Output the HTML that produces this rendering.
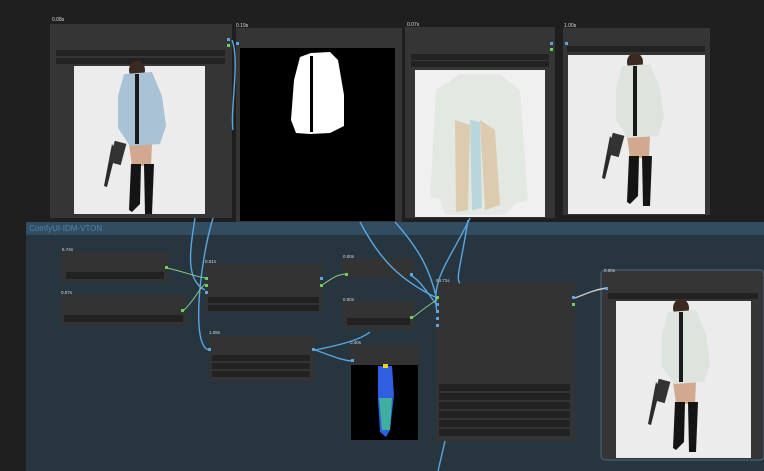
<!DOCTYPE html>
<html><head><style>html,body{margin:0;padding:0;background:#202020;}svg{display:block}text{font-family:"Liberation Sans",sans-serif}</style></head><body>
<svg width="764" height="471" viewBox="0 0 764 471" xmlns="http://www.w3.org/2000/svg">
<defs>
<g id="person">
<path d="M38 78 L30 120 L33 121 L42 85 Z" fill="#2a2a2a"/>
<rect x="38" y="76" width="12" height="22" fill="#333" transform="rotate(15 44 86)"/>
<path d="M55 78 L78 78 L77 100 L58 100 Z" fill="#d2a88e"/>
<path d="M57 98 L67 98 L66 138 L58 146 L55 144 Z" fill="#141414"/>
<path d="M70 98 L80 98 L78 148 L71 148 Z" fill="#141414"/>
<ellipse cx="63" cy="4" rx="8" ry="9" fill="#3a2a22"/>
<path d="M50 8 L78 6 L88 30 L92 60 L86 78 L56 80 L44 62 L44 30 Z" class="jk"/>
<rect x="61" y="8" width="4" height="70" fill="#1a1a1a"/>
</g>
</defs>
<rect width="764" height="471" fill="#1f1f1f"/>
<rect x="26" y="222" width="738" height="249" fill="#27353f"/>
<rect x="26" y="222" width="738" height="13" fill="#324c60"/>
<text x="29" y="231" font-size="8" fill="#4a86b0">ComfyUI-IDM-VTON</text>

<rect x="50" y="24" width="182" height="194" fill="#353535"/>
<rect x="56" y="50" width="169" height="6" fill="#222"/><rect x="56" y="58" width="169" height="6" fill="#222"/>
<rect x="74" y="66" width="131" height="148" fill="#ececec"/>
<g transform="translate(74,66)"><use href="#person" style="fill:#a9c2d6"/></g>
<rect x="236" y="28" width="166" height="194" fill="#353535"/>
<rect x="240" y="48" width="155" height="173" fill="#000"/>
<path d="M300 57 L311 53 L330 52 L338 60 L344 95 L344 126 L330 133 L310 134 L296 133 L291 120 L294 80 Z" fill="#fff"/>
<rect x="310" y="56" width="3" height="76" fill="#000"/>
<rect x="405" y="27" width="150" height="191" fill="#353535"/>
<rect x="411" y="54" width="138" height="6" fill="#222"/><rect x="411" y="61" width="138" height="6" fill="#222"/>
<rect x="415" y="70" width="130" height="147" fill="#f0f0f0"/>
<path d="M460 74 L500 74 L520 90 L528 200 L515 204 L505 215 L445 215 L440 200 L430 196 L436 90 Z" fill="#e4e8e2"/>
<path d="M455 120 L470 125 L468 210 L456 212 Z M480 120 L495 130 L500 205 L485 210 Z" fill="#d8b890" opacity=".6"/>
<path d="M470 120 L480 122 L482 208 L472 210 Z" fill="#9ccad8" opacity=".6"/>
<rect x="563" y="28" width="147" height="187" fill="#353535"/>
<rect x="567" y="46" width="138" height="6" fill="#222"/>
<rect x="568" y="55" width="137" height="159" fill="#ececec"/>
<g transform="translate(572,58)"><use href="#person" style="fill:#dde4de"/></g>
<g font-size="5" fill="#ddd"><text x="52" y="21">0.08s</text><text x="236" y="27">0.19s</text><text x="407" y="26">0.07s</text><text x="564" y="27">1.00s</text></g>

<g fill="#333">
<rect x="61" y="252" width="108" height="30"/><rect x="61" y="295" width="125" height="30"/>
<rect x="205" y="264" width="117" height="48"/><rect x="209" y="336" width="106" height="45"/>
<rect x="343" y="259" width="71" height="18"/><rect x="343" y="301" width="71" height="28"/>
<rect x="350" y="345" width="69" height="20"/><rect x="436" y="283" width="139" height="158"/>
</g>
<rect x="601" y="270" width="163" height="190" rx="4" fill="#353535" stroke="#4a6a80"/>
<g fill="#222">
<rect x="66" y="272" width="98" height="7"/><rect x="64" y="315" width="119" height="7"/>
<rect x="208" y="297" width="111" height="6"/><rect x="208" y="305" width="111" height="6"/>
<rect x="212" y="355" width="98" height="6"/><rect x="212" y="363" width="98" height="6"/><rect x="212" y="371" width="98" height="6"/>
<rect x="347" y="318" width="63" height="7"/>
<rect x="439" y="384" width="131" height="7"/><rect x="439" y="393" width="131" height="7"/><rect x="439" y="402" width="131" height="7"/><rect x="439" y="411" width="131" height="7"/><rect x="439" y="420" width="131" height="7"/><rect x="439" y="429" width="131" height="7"/>
<rect x="608" y="293" width="150" height="6"/>
</g>
<rect x="351" y="365" width="67" height="75" fill="#000"/>
<path d="M378 366 L392 366 L394 395 L390 430 L386 437 L380 432 L378 400 Z" fill="#2f5fe0"/>
<path d="M379 398 L392 398 L390 430 L382 430 Z" fill="#3fb0a0"/>
<rect x="383" y="364" width="5" height="4" fill="#f0d020"/>
<rect x="616" y="301" width="135" height="157" fill="#ececec"/>
<g transform="translate(618,304)"><use href="#person" style="fill:#dde4de"/></g>
<g font-size="4.5" fill="#ddd"><text x="62" y="251">5.74s</text><text x="61" y="294">0.07s</text><text x="205" y="263">0.01s</text><text x="209" y="334">1.08s</text><text x="343" y="258">0.00s</text><text x="343" y="301">0.00s</text><text x="350" y="344">0.40s</text><text x="436" y="282">93.71s</text><text x="604" y="272">0.00s</text></g>

<g fill="none" stroke="#5aa6e0" stroke-width="1.4">
<path d="M195 218 C190 250 185 280 205 290"/><path d="M213 218 C200 260 190 350 210 350"/>
<path d="M232 40 C240 60 230 110 233 130"/><path d="M360 222 C380 260 400 280 437 298"/>
<path d="M395 222 C420 250 430 270 437 300"/><path d="M470 218 C450 260 430 280 437 312"/>
<path d="M468 220 C462 260 455 280 460 283"/><path d="M315 350 C340 345 360 340 370 332"/>
<path d="M315 350 C330 355 340 360 352 361"/><path d="M445 441 L438 471"/>
<path d="M575 298 C590 292 595 290 606 288" stroke="#ccc"/>
<path d="M410 275 C420 280 425 290 437 305"/>
</g>
<g fill="none" stroke="#8ec88a" stroke-width="1"><path d="M167 268 C185 272 190 275 205 278"/><path d="M183 311 C195 300 198 290 205 284"/><path d="M322 285 C330 280 335 275 345 274"/><path d="M412 318 C420 312 428 305 437 300"/></g>
<g fill="#6ccf5c"><rect x="165" y="266" width="3" height="3"/><rect x="181" y="309" width="3" height="3"/><rect x="205" y="277" width="3" height="3"/><rect x="205" y="284" width="3" height="3"/><rect x="320" y="284" width="3" height="3"/><rect x="345" y="273" width="3" height="3"/><rect x="410" y="316" width="3" height="3"/><rect x="436" y="296" width="3" height="3"/><rect x="572" y="303" width="3" height="3"/><rect x="227" y="44" width="3" height="3"/><rect x="550" y="48" width="3" height="3"/></g>
<g fill="#5aa6e0"><rect x="205" y="291" width="3" height="3"/><rect x="320" y="277" width="3" height="3"/><rect x="208" y="348" width="3" height="3"/><rect x="312" y="348" width="3" height="3"/><rect x="351" y="359" width="3" height="3"/><rect x="410" y="273" width="3" height="3"/><rect x="436" y="303" width="3" height="3"/><rect x="436" y="310" width="3" height="3"/><rect x="436" y="317" width="3" height="3"/><rect x="436" y="324" width="3" height="3"/><rect x="572" y="296" width="3" height="3"/><rect x="605" y="287" width="3" height="3"/><rect x="227" y="38" width="3" height="3"/><rect x="236" y="42" width="3" height="3"/><rect x="550" y="42" width="3" height="3"/><rect x="565" y="42" width="3" height="3"/></g>
</svg>
</body></html>
